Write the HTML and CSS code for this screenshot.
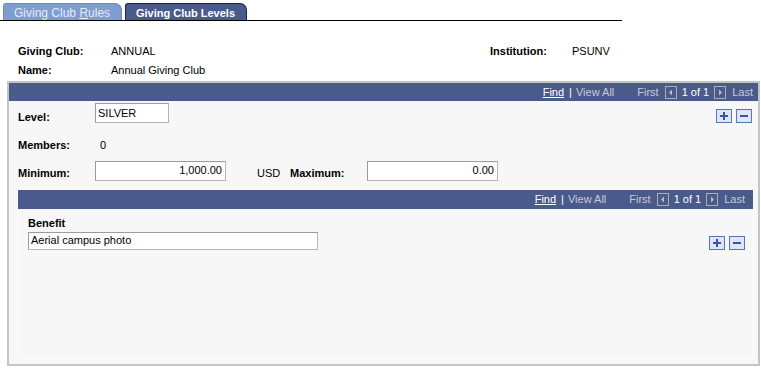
FILE: index.html
```html
<!DOCTYPE html>
<html lang="en">
<head>
    <meta charset="UTF-8">
    <meta name="viewport" content="width=device-width, initial-scale=1.0">
    <title>Giving Club Levels</title>
    <link rel="stylesheet" href="styles.css">
</head>
<body>
    <div class="tabs">
        <div class="tab">Giving Club <u>R</u>ules</div>
        <div class="tab active">Giving Club Levels</div>
    </div>

    <div class="info">
        <span class="lbl">Giving Club:</span>
        <span>ANNUAL</span>
        <span class="lbl">Institution:</span>
        <span>PSUNV</span>
        <span class="lbl">Name:</span>
        <span>Annual Giving Club</span>
    </div>

    <div class="grid">
        <div class="navbar">
            <a class="find">Find</a><span class="sep">|</span><span class="dim">View All</span>
            <span class="dim first">First</span>
            <svg class="arrow" width="12" height="13" viewBox="0 0 12 13"><rect x="0.5" y="0.5" width="11" height="12" fill="#4a5a8a" stroke="#a9aebf"/><path d="M7 3.5 L4 6.5 L7 9.5 Z" fill="#b8bcc8"/></svg>
            <span class="count">1 of 1</span>
            <svg class="arrow" width="12" height="13" viewBox="0 0 12 13"><rect x="0.5" y="0.5" width="11" height="12" fill="#4a5a8a" stroke="#a9aebf"/><path d="M5 3.5 L8 6.5 L5 9.5 Z" fill="#b8bcc8"/></svg>
            <span class="dim">Last</span>
        </div>

        <div class="row level-row">
            <span class="lbl col-lbl">Level:</span>
            <div class="field f-level">SILVER</div>
            <div class="rowbtns">
                <svg width="16" height="14" viewBox="0 0 16 14"><rect x="0.5" y="0.5" width="15" height="13" fill="#dce6f8" stroke="#5a74b6"/><path d="M8 3 V11 M4 7 H12" stroke="#3a54a4" stroke-width="2"/></svg>
                <svg width="16" height="14" viewBox="0 0 16 14"><rect x="0.5" y="0.5" width="15" height="13" fill="#dce6f8" stroke="#5a74b6"/><path d="M4 7 H12" stroke="#3a54a4" stroke-width="2"/></svg>
            </div>
        </div>

        <div class="row members-row">
            <span class="lbl col-lbl">Members:</span>
            <span class="members">0</span>
        </div>

        <div class="row amount-row">
            <span class="lbl col-lbl">Minimum:</span>
            <div class="field f-amount">1,000.00</div>
            <span class="currency">USD</span>
            <span class="lbl col-lbl">Maximum:</span>
            <div class="field f-amount">0.00</div>
        </div>

        <div class="subgrid">
            <div class="navbar">
                <a class="find">Find</a><span class="sep">|</span><span class="dim">View All</span>
                <span class="dim first">First</span>
                <svg class="arrow" width="12" height="13" viewBox="0 0 12 13"><rect x="0.5" y="0.5" width="11" height="12" fill="#4a5a8a" stroke="#a9aebf"/><path d="M7 3.5 L4 6.5 L7 9.5 Z" fill="#b8bcc8"/></svg>
                <span class="count">1 of 1</span>
                <svg class="arrow" width="12" height="13" viewBox="0 0 12 13"><rect x="0.5" y="0.5" width="11" height="12" fill="#4a5a8a" stroke="#a9aebf"/><path d="M5 3.5 L8 6.5 L5 9.5 Z" fill="#b8bcc8"/></svg>
                <span class="dim">Last</span>
            </div>
            <div class="row benefit-head">
                <span class="lbl">Benefit</span>
            </div>
            <div class="row benefit-row">
                <div class="field f-benefit">Aerial campus photo</div>
                <div class="rowbtns">
                    <svg width="16" height="14" viewBox="0 0 16 14"><rect x="0.5" y="0.5" width="15" height="13" fill="#dce6f8" stroke="#5a74b6"/><path d="M8 3 V11 M4 7 H12" stroke="#3a54a4" stroke-width="2"/></svg>
                    <svg width="16" height="14" viewBox="0 0 16 14"><rect x="0.5" y="0.5" width="15" height="13" fill="#dce6f8" stroke="#5a74b6"/><path d="M4 7 H12" stroke="#3a54a4" stroke-width="2"/></svg>
                </div>
            </div>
        </div>
    </div>
</body>
</html>
```

FILE: styles.css
```css
body {
    font-family: "Liberation Sans", Arial, sans-serif;
    font-size: 11px;
    line-height: 13px;
    color: #000;
    margin: 0;
    background-color: #fff;
}
.lbl {
    font-weight: bold;
}

/* tabs */
.tabs {
    display: flex;
    gap: 3px;
    width: 619px;
    padding: 3px 0 0 3px;
    border-bottom: 1px solid #000;
}
.tab {
    box-sizing: border-box;
    width: 119px;
    height: 17px;
    padding: 2px 0 0 10px;
    font-size: 12px;
    line-height: 14px;
    color: #e4ebf7;
    background: #7e9dd0;
    border: 1px solid #6d89bb;
    border-bottom: none;
    border-radius: 3px 7px 0 0;
}
.tab.active {
    width: 122px;
    font-size: 11px;
    font-weight: bold;
    color: #fff;
    background: #4a5a8a;
    border-color: #1e2640;
}

/* header fields */
.info {
    display: grid;
    grid-template-columns: 93px 379px 82px auto;
    grid-auto-rows: 19px;
    align-items: center;
    padding: 21px 0 0 18px;
    height: 39px;
}

/* grids */
.grid {
    width: 749px;
    margin-left: 7px;
    border: 2px solid #c4c4c4;
    background: #f7f7f7;
    padding-bottom: 5px;
}
.navbar {
    display: flex;
    justify-content: flex-end;
    align-items: center;
    height: 18px;
    padding-right: 5px;
    background: #4a5a8a;
    color: #c6cbd9;
}
.navbar .find {
    color: #fff;
    text-decoration: underline;
}
.navbar .sep {
    color: #fff;
    margin: 0 4px 0 5px;
}
.navbar .first {
    margin-left: 23px;
    margin-right: 6px;
}
.navbar .count {
    color: #fff;
    margin: 0 5px;
}
.navbar .arrow {
    display: block;
}
.navbar .arrow + .dim {
    margin-left: 6px;
}

.row {
    display: flex;
    align-items: flex-start;
    padding: 0 6px 0 9px;
}
.col-lbl {
    width: 77px;
    flex-shrink: 0;
}
.field {
    box-sizing: border-box;
    height: 20px;
    padding: 3px 3px 0 2px;
    background: #fff;
    border: 1px solid #b4b4b4;
    border-top-color: #9c9c9c;
    border-left-color: #9c9c9c;
}
.f-level {
    width: 74px;
}
.f-amount {
    width: 131px;
    padding-top: 2px;
    text-align: right;
}
.f-benefit {
    width: 290px;
    height: 18px;
    padding: 1px 2px 0;
}
.rowbtns {
    display: flex;
    gap: 4px;
    margin-left: auto;
}
.rowbtns svg {
    display: block;
}

.level-row {
    height: 20px;
    margin-top: 2px;
}
.level-row .col-lbl {
    padding-top: 8px;
}
.level-row .rowbtns {
    margin-top: 6px;
}
.members-row {
    margin-top: 16px;
}
.members {
    padding-left: 5px;
}
.amount-row {
    margin-top: 9px;
}
.amount-row .col-lbl,
.amount-row .currency {
    padding-top: 6px;
}
.currency {
    width: 33px;
    margin-left: 31px;
}

.subgrid {
    height: 168px;
    margin: 8px 4px 0 8px;
    border: 1px solid #fff;
}
.subgrid .navbar {
    height: 19px;
    padding-right: 8px;
}
.subgrid .row {
    padding: 0 8px 0 10px;
}
.benefit-head {
    margin-top: 8px;
}
.benefit-row {
    margin-top: 2px;
}
.benefit-row .rowbtns {
    margin-top: 4px;
}
```
